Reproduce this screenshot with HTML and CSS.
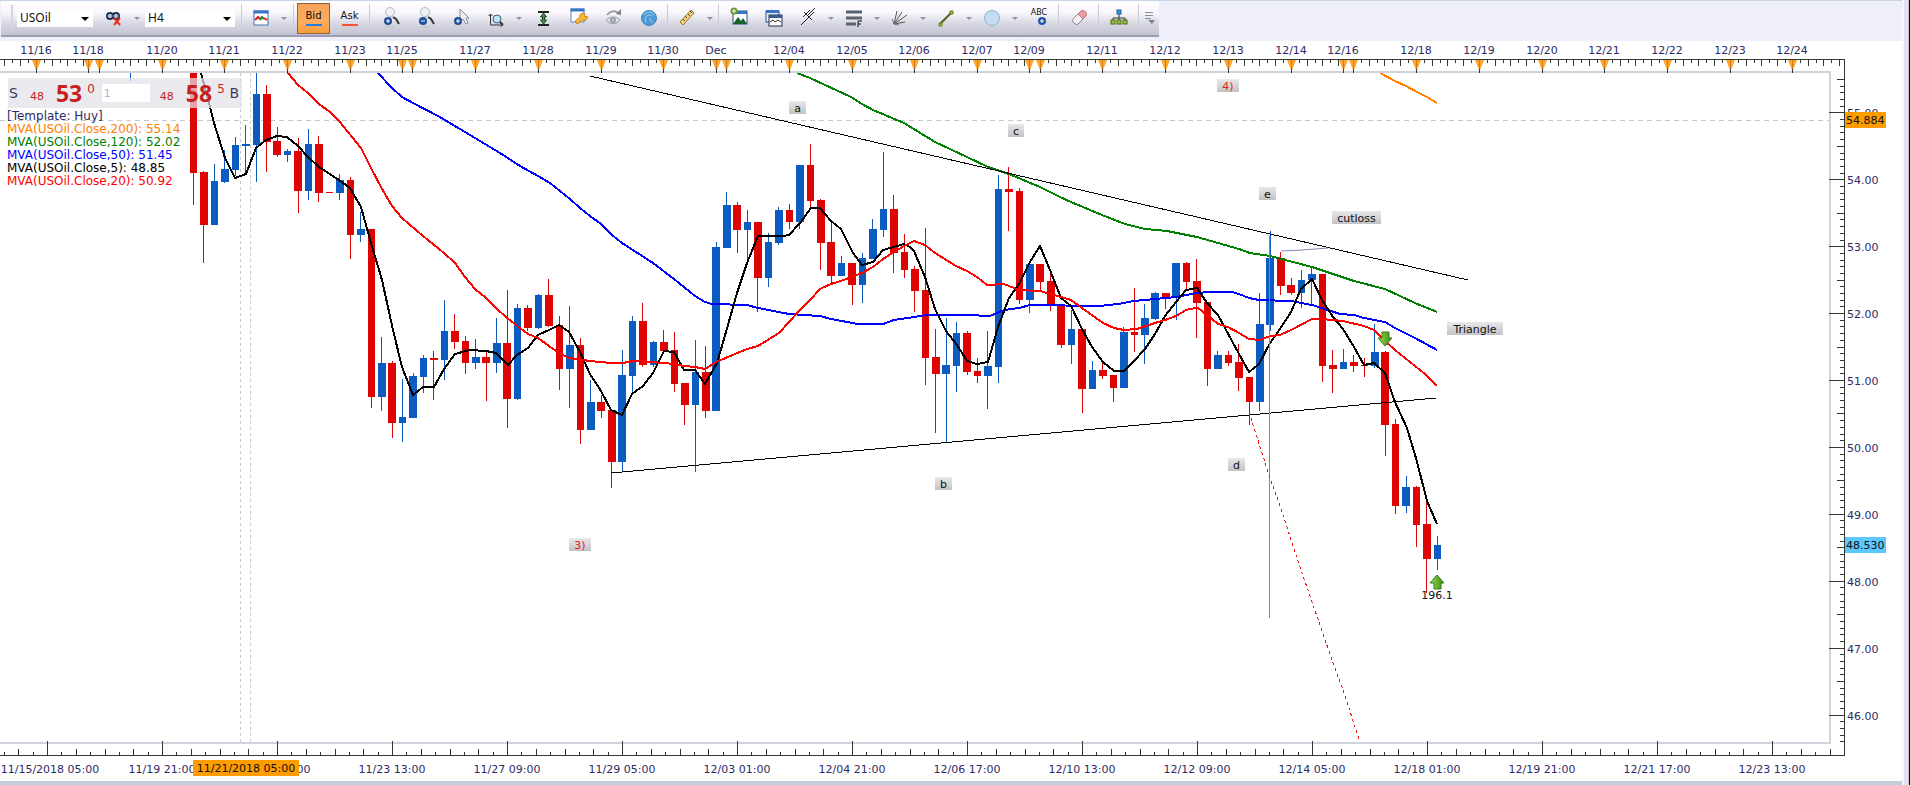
FILE: index.html
```html
<!DOCTYPE html>
<html lang="en">
<head>
<meta charset="utf-8">
<title>USOil H4</title>
<link rel="stylesheet" href="styles.css">
</head>
<body>
<div class="window">
<main class="shell">
  <header class="strip">
    <div class="toolbar" role="toolbar" aria-label="Chart tools">
      <span class="grip"></span>
      <span class="combo combo-symbol"><select aria-label="Symbol"><option>USOil</option></select></span>
      <div class="group group-link">
        <div class="split">
          <button class="tool" aria-label="Unlink"><svg width="18" height="22" viewBox="0 0 18 22"><g fill="none" stroke="#1d2c50" stroke-width="2"><circle cx="5" cy="9" r="3"/><circle cx="11" cy="9" r="3"/></g><path d="M2 9h12" stroke="#7090b0"/><path d="M9 11l6 7M15 11l-6 7" stroke="#e0301c" stroke-width="2"/></svg></button>
          <button class="drop" aria-label="Link options"></button>
        </div>
      </div>
      <span class="combo combo-period"><select aria-label="Period"><option>H4</option></select></span>
      <div class="group group-view">
        <span class="sep"></span>
        <div class="split">
          <button class="tool" aria-label="Chart type"><svg width="18" height="22" viewBox="0 0 18 22"><rect x="2" y="4" width="14" height="14" fill="#fff" stroke="#3d6fb4"/><path d="M1.500 3.500h15v3h-15z" fill="#3974c4"/><path d="M3 13l3-3 2 2" fill="none" stroke="#e02020" stroke-width="2"/><path d="M8 13l2-3 2 2" fill="none" stroke="#208020" stroke-width="2"/><path d="M12 11l3 2" stroke="#e02020" stroke-width="2"/></svg></button>
          <button class="drop" aria-label="Chart type options"></button>
        </div>
      </div>
      <span class="sep"></span>
      <div class="group group-price">
        <button class="price price-on">Bid</button>
        <button class="price price-ask">Ask</button>
      </div>
      <span class="sep"></span>
      <div class="group group-zoom">
        <button class="tool" aria-label="Zoom in"><svg width="20" height="22" viewBox="0 0 20 22"><circle cx="8" cy="5" r="4.500" fill="#eef1f5" stroke="#b4b8c0"/><path d="M11 10l3 2 3 5" fill="none" stroke="#333" stroke-width="2"/><circle cx="6" cy="14" r="4" fill="#1f4f98"/><path d="M4 14h4M6 12v4" stroke="#fff"/><path d="M4 20h9" stroke="#c8cad2" stroke-width="2"/></svg></button>
        <button class="tool" aria-label="Zoom out"><svg width="20" height="22" viewBox="0 0 20 22"><circle cx="8" cy="5" r="4.500" fill="#eef1f5" stroke="#b4b8c0"/><path d="M11 10l3 2 3 5" fill="none" stroke="#333" stroke-width="2"/><circle cx="6" cy="14" r="4" fill="#1f4f98"/><path d="M4 14h4" stroke="#fff"/><path d="M4 20h9" stroke="#c8cad2" stroke-width="2"/></svg></button>
        <button class="tool" aria-label="Zoom pointer"><svg width="20" height="22" viewBox="0 0 20 22"><path d="M8 2v12l3-2 3 5 2-1-2-5h3z" fill="#eceef2" stroke="#8a8e98"/><circle cx="6" cy="14" r="4" fill="#1f4f98"/><path d="M4 14h4M6 12v4" stroke="#fff"/></svg></button>
        <div class="split">
          <button class="tool" aria-label="Scale"><svg width="18" height="22" viewBox="0 0 18 22"><path d="M3.500 7v11h12M1.500 9l2-2 2 2M13.500 16l2 2-2 2" fill="none" stroke="#333"/><circle cx="10" cy="12" r="4" fill="#bfe6f6" stroke="#3a6080"/><path d="M13 15l3 3" stroke="#333" stroke-width="2"/></svg></button>
          <button class="drop" aria-label="Scale options"></button>
        </div>
        <button class="tool" aria-label="Fit height"><svg width="18" height="22" viewBox="0 0 18 22"><path d="M4 5h11M4 18h11" stroke="#222" stroke-width="2"/><path d="M9.500 6l3 4h-2v3h2l-3 4-3-4h2v-3h-2z" fill="#3a9a3a" stroke="#1d4020"/></svg></button>
        <button class="tool" aria-label="Properties"><svg width="20" height="22" viewBox="0 0 20 22"><rect x="3" y="2" width="13" height="13" fill="#fff" stroke="#5c88c8"/><path d="M2.500 1.500h14v3h-14z" fill="#3974c4"/><path d="M17 7a3 3 0 0 0-5 3l-5 4 2 3 6-4a3 3 0 0 0 4-4l-2 1-1-1z" fill="#f5b63a" stroke="#c98a14"/></svg></button>
        <button class="tool" aria-label="Show or hide"><svg width="20" height="22" viewBox="0 0 20 22"><g fill="none" stroke="#9a9da3"><path d="M3 13c4-4 11-4 14 0-4 5-10 5-14 0z"/><circle cx="10" cy="13" r="2" stroke-width="2"/><path d="M4 8c3-4 8-5 11-2" stroke-width="2"/></g><path d="M18 2v6l-5-1z" fill="#7c7f86"/></svg></button>
        <button class="tool" aria-label="Refresh"><svg width="20" height="22" viewBox="0 0 20 22"><circle cx="11" cy="11" r="7.500" fill="#4a9bd4" stroke="#3b86c2"/><path d="M6 8c3-4 8-4 10 0M8 15c-3-5 3-9 6-6M11 11l4 5" fill="none" stroke="#a6d2ee"/></svg></button>
      </div>
      <span class="sep"></span>
      <div class="split">
        <button class="tool" aria-label="Ruler"><svg width="20" height="22" viewBox="0 0 20 22"><path d="M3 15L14 3l3 3L6 18z" fill="#f4cf7a" stroke="#9a7636"/><path d="M6 12l2 2M8 9l2 2M11 7l2 2M13 4l2 2" stroke="#604818"/></svg></button>
        <button class="drop" aria-label="Ruler options"></button>
      </div>
      <span class="sep"></span>
      <div class="group">
        <button class="tool" aria-label="Add picture"><svg width="20" height="22" viewBox="0 0 20 22"><rect x="4" y="4" width="14" height="13" fill="#fff" stroke="#24508c"/><path d="M4 4h14v3H4z" fill="#3974c4"/><path d="M4 17l5-7 3 4 2-3 4 6z" fill="#18602a"/><circle cx="5" cy="4" r="3.500" fill="#6a9a28"/><path d="M3 4h4M5 2v4" stroke="#fff"/></svg></button>
        <button class="tool" aria-label="Windows"><svg width="20" height="22" viewBox="0 0 20 22"><rect x="2" y="4" width="13" height="11" fill="#e8effa" stroke="#24508c"/><path d="M2 3h13v3H2z" fill="#3974c4"/><rect x="5" y="8" width="13" height="11" fill="#fff" stroke="#1d2c50"/><path d="M5 8h13v3H5z" fill="#3a5a90"/><path d="M6 15l3-2 2 2 3-2 3 2" fill="none" stroke="#333"/></svg></button>
        <div class="split">
          <button class="tool" aria-label="Pitchfork"><svg width="18" height="22" viewBox="0 0 18 22"><path d="M2 18L11 9M5 5l8 8M4 10l7-7M7 13l8-8M9 8l7-7" fill="none" stroke="#222"/></svg></button>
          <button class="drop" aria-label="Pitchfork options"></button>
        </div>
        <div class="split">
          <button class="tool" aria-label="Levels"><svg width="18" height="22" viewBox="0 0 18 22"><path d="M1 5h16M1 11h16M1 17h10" stroke="#59636f" stroke-width="3"/><path d="M13 20v-6h4M13 17h3" fill="none" stroke="#111"/></svg></button>
          <button class="drop" aria-label="Levels options"></button>
        </div>
        <div class="split">
          <button class="tool" aria-label="Fan"><svg width="18" height="22" viewBox="0 0 18 22"><path d="M3 17L6 4M3 17l8-12M3 17L16 8M3 17l11-2" fill="none" stroke="#555"/><path d="M1 12l2 5 5 1" fill="none" stroke="#777"/></svg></button>
          <button class="drop" aria-label="Fan options"></button>
        </div>
        <div class="split">
          <button class="tool" aria-label="Line"><svg width="18" height="22" viewBox="0 0 18 22"><path d="M3 17L15 5" stroke="#55621c" stroke-width="2"/><path d="M2 16h3v3H2zM13 4h3v3h-3z" fill="#9ac43a" stroke="#607c1c"/></svg></button>
          <button class="drop" aria-label="Line options"></button>
        </div>
        <div class="split">
          <button class="tool" aria-label="Ellipse"><svg width="18" height="22" viewBox="0 0 18 22"><circle cx="9" cy="11" r="7.500" fill="#c4dcf0" stroke="#8fb4d8"/></svg></button>
          <button class="drop" aria-label="Ellipse options"></button>
        </div>
        <button class="tool" aria-label="Add text"><svg width="20" height="24" viewBox="0 0 20 24"><text x="10" y="9" class="icon-text">ABC</text><circle cx="13" cy="15" r="4" fill="#2456a4"/><path d="M11 15h4M13 13v4" stroke="#fff"/></svg></button>
      </div>
      <span class="sep"></span>
      <button class="tool" aria-label="Eraser"><svg width="20" height="22" viewBox="0 0 20 22"><path d="M4 12l5-5 5 5-5 5c-2 2-7-3-5-5z" fill="#f4f2f4" stroke="#8c8690"/><path d="M9 7l3-3c3-2 7 2 5 5l-3 3z" fill="#ee9aa2" stroke="#b87880"/></svg></button>
      <span class="sep"></span>
      <button class="tool" aria-label="Hierarchy"><svg width="20" height="22" viewBox="0 0 20 22"><path d="M10 7v7M4 14v-3h12v3" fill="none" stroke="#333"/><rect x="8" y="3" width="4" height="4" fill="#3a9ae0" stroke="#1c60a0"/><g fill="#9ac43a" stroke="#4c6a14"><rect x="2" y="13" width="4" height="4"/><rect x="8" y="13" width="4" height="4"/><rect x="14" y="13" width="4" height="4"/></g></svg></button>
      <span class="sep"></span>
      <button class="more" aria-label="More tools"><svg width="12" height="14" viewBox="0 0 12 14"><path d="M1 1.500h8M1 4.500h8M1 7.500h6" stroke="#8a8c98"/><path d="M4 9h7l-3 4z" fill="#7c7e8a"/></svg></button>
    </div>
  </header>

  <section class="chart" aria-label="USOil four hour chart">
    <svg id="chart" class="canvas" viewBox="0 41 1902 740"></svg>
    <div class="quote">
      <span class="side">S</span>
      <span class="small">48</span><span class="big">53</span><sup>0</sup>
      <select class="lots" aria-label="Lots"><option>1</option></select>
      <span class="small">48</span><span class="big">58</span><sup>5</sup>
      <span class="side">B</span>
    </div>
    <ul class="legend">
      <li>[Template: Huy]</li>
      <li class="mva200">MVA(USOil.Close,200): 55.14</li>
      <li class="mva120">MVA(USOil.Close,120): 52.02</li>
      <li class="mva50">MVA(USOil.Close,50): 51.45</li>
      <li class="mva5">MVA(USOil.Close,5): 48.85</li>
      <li class="mva20">MVA(USOil.Close,20): 50.92</li>
    </ul>
  </section>
  <footer class="base"></footer>
</main>
</div>
<script src="chart.js"></script>
</body>
</html>
```
FILE: styles.css
```css
*, *::before, *::after { box-sizing: border-box; }
body {
  margin: 0;
  background: #fff;
  font: 11px/13px "DejaVu Sans", Verdana, sans-serif;
  color: #2d2a66;
}
button, select { font: inherit; color: inherit; border: 0; padding: 0; margin: 0; background: none; border-radius: 0; }
select { appearance: none; }
.window { display: flex; border-right: 1px solid #0c1024; min-height: 100vh; }
.window::after { content: ""; flex: none; width: 7px; background: #e2e0f2; border-left: 2px solid #f6f6fc; border-right: 1px solid #c6c8da; }
.shell { flex: 1; min-width: 0; display: flex; flex-direction: column; }

.strip { height: 41px; padding: 0 0 4px 1px; background: #efeff9; border-top: 1px solid #c6d4e6; display: flex; }
.toolbar {
  display: flex;
  align-items: center;
  height: 36px;
  background: linear-gradient(#fff, #f6f6fb 35%, #d9d9e4 65%, #c2c2d2);
  border-bottom: 2px solid #9c9eb4;
}
.grip { width: 16px; height: 26px; border-left: 10px solid transparent; }
.grip::before { content: ""; display: block; width: 2px; height: 26px; background: #d4d5e0; }
.combo { position: relative; height: 18px; background: #fff; }
.combo::after {
  content: "";
  position: absolute;
  right: 4px;
  top: 8px;
  border: 4px solid transparent;
  border-top-color: #000;
  border-bottom: 0;
  pointer-events: none;
}
.combo select { display: block; width: 100%; height: 18px; padding: 0 3px; font: 12px/16px "Noto Sans", sans-serif; color: #111; }
.combo-symbol { width: 76px; }
.combo-period { width: 90px; }
.group, .split { display: flex; align-items: center; }
.group-link { padding: 0 2px 0 4px; }
.group-view { padding: 0 1px 0 4px; }
.group-price { gap: 3px; padding: 0 1px; }
.group-zoom { padding: 0 0 0 2px; }
.sep { width: 1px; height: 28px; margin: 0 2px; background: #cbccda; }
.tool { width: 35px; height: 30px; display: flex; align-items: center; justify-content: center; }
.split .tool { width: 34px; }
.drop { width: 12px; height: 30px; }
.drop::before {
  content: "";
  display: block;
  margin: 0 auto;
  width: 6px;
  border: 3px solid transparent;
  border-top-color: #8f90a2;
  border-bottom: 0;
}
.price { width: 33px; height: 31px; font-size: 10px; line-height: 12px; color: #111; display: flex; flex-direction: column; align-items: center; justify-content: center; gap: 2px; }
.price::after { content: ""; width: 16px; height: 2px; background: #1f7fe0; }
.price-on { background: linear-gradient(#f7a35c, #fbae5e 60%, #fb9d38); border: 1px solid #8a6440; }
.price-ask::after { background: #f4552c; }
.more { width: 18px; height: 30px; display: flex; align-items: center; justify-content: center; }
.icon-text { font: 8px "DejaVu Sans", sans-serif; fill: #111; text-anchor: middle; }

.chart { position: relative; }
.canvas { display: block; width: 100%; height: auto; }
.canvas text { font: 11px "DejaVu Sans", Verdana, sans-serif; fill: #2d2a66; }
.canvas .mid { text-anchor: middle; }
.canvas .ink { fill: #111; }
.canvas .hot { fill: #f01818; }
.crisp { shape-rendering: crispEdges; }
.quote {
  position: absolute;
  left: 8px;
  top: 37px;
  width: 234px;
  height: 30px;
  display: flex;
  align-items: center;
  padding: 0 3px 0 1px;
  background: rgba(226, 226, 232, 0.72);
  color: #c81e1e;
}
.side { font-size: 14px; color: #3a3a62; }
.side:first-child { margin-right: 12px; }
.side:last-child { margin-left: auto; }
.small { font-size: 11px; padding-top: 6px; }
.big { font: bold 23px/26px "Noto Sans", sans-serif; margin-left: 12px; }
sup { font-size: 12px; line-height: 12px; margin-left: 5px; align-self: flex-start; padding-top: 5px; }
.lots { width: 48px; height: 18px; margin: 0 10px 0 7px; padding: 0 2px; background: #fff; color: #b4b4c0; }
.legend { position: absolute; left: 7px; top: 69px; margin: 0; padding: 0; list-style: none; font-size: 12px; }
.mva200 { color: #ff8000; }
.mva120 { color: #008000; }
.mva50 { color: #0000ff; }
.mva5 { color: #000; }
.mva20 { color: #ff0000; }
.base { flex: 1; min-height: 4px; background: #c3cddc; }
```
FILE: chart.js
```js
const NS = "http://www.w3.org/2000/svg";
const chart = document.getElementById("chart");

function add(name, attrs, text) {
  const node = document.createElementNS(NS, name);
  for (const key in attrs) node.setAttribute(key, attrs[key]);
  if (text !== undefined) node.textContent = text;
  chart.appendChild(node);
  return node;
}
const box = (x, y, width, height, fill) => add("rect", { x, y, width, height, fill, class: "crisp" });
const line = (points, stroke, extra) => add("polyline", Object.assign({ points, stroke, fill: "none" }, extra));

add("defs", {}).innerHTML =
  '<linearGradient id="tag" x2="0" y2="1"><stop offset="0" stop-color="#e9e9ea"/><stop offset="1" stop-color="#c2c2c6"/></linearGradient>' +
  '<linearGradient id="arrow" x2="1" y2="0"><stop offset="0" stop-color="#a6dc4c"/><stop offset="1" stop-color="#2f8a12"/></linearGradient>' +
  '<clipPath id="plot"><rect x="0" y="73" width="1829" height="669"/></clipPath>';

const INK = "#333833";
const FRAME = "#cfd3dc";
box(0, 71, 1831, 2, FRAME);
box(0, 742, 1831, 2, FRAME);
box(1829, 71, 2, 673, FRAME);

/* crosshair */
line("0,120.5 1829,120.5", "#c8c8c8", { "stroke-dasharray": "5 4", class: "crisp" });
line("240.5,73 240.5,742", "#c8c8c8", { "stroke-dasharray": "3 3", class: "crisp" });
line("250.5,73 250.5,742", "#c8c8c8", { "stroke-dasharray": "3 3", class: "crisp" });

/* candles: direction, high, body top, body bottom, low */
const candles = `R 73 73 173 205;R 171 172 225 263;B 164 181 225 225;B 150 169 182 183;B 137 145 170 176;B 125 144 146 173;B 73 94 145 182;R 85 94 142 172;R 127 141 155 157;B 149 151 155 162;R 138 151 191 213;B 129 144 191 200;R 136 144 193 202;R 192 192 193 193;B 174 180 193 200;R 177 180 235 259;B 212 229 235 242;R 229 229 397 408;B 337 363 397 411;R 361 363 423 438;
B 379 417 423 442;B 373 376 418 418;B 355 358 377 393;R 351 358 360 400;B 300 331 360 380;R 314 331 342 349;R 336 341 363 374;B 339 357 363 369;R 352 357 363 401;B 318 343 363 373;R 290 343 399 428;B 304 308 399 400;R 305 308 328 331;B 294 295 328 329;R 279 295 326 327;R 316 325 369 390;B 306 345 369 408;R 338 345 430 444;B 380 402 430 430;R 395 402 411 418;
R 410 410 462 488;B 350 375 462 472;B 316 321 376 392;R 303 321 365 367;B 341 342 365 367;R 330 342 351 351;R 332 350 384 392;R 383 383 405 425;B 340 372 405 472;R 346 372 411 418;B 242 247 411 411;B 192 205 248 248;R 202 205 230 253;B 210 222 230 260;R 222 222 278 312;B 233 242 278 287;B 207 210 243 245;R 204 210 222 229;B 165 165 222 229;R 144 165 201 207;
R 199 200 243 270;R 222 242 276 284;B 256 263 276 276;R 263 263 285 305;B 253 258 285 303;B 219 229 259 259;B 152 209 230 237;R 195 209 253 273;R 234 252 270 278;R 266 269 291 312;R 228 290 358 385;R 329 357 374 433;B 318 365 374 442;B 322 333 366 392;R 331 333 372 375;R 358 371 376 383;B 331 366 376 409;B 175 189 367 383;R 167 189 192 231;R 188 191 300 304;
B 263 264 300 313;R 264 264 282 291;R 270 281 305 311;R 304 306 345 348;B 310 329 345 364;R 329 329 389 413;B 361 370 389 389;R 362 370 376 379;R 375 375 388 402;B 327 332 388 388;R 288 332 335 352;B 304 318 335 364;B 292 293 319 320;R 293 293 297 309;B 263 263 297 320;R 262 263 282 291;R 259 281 303 338;R 302 302 369 386;B 351 355 369 369;R 351 355 363 366;
R 344 362 378 391;R 377 377 402 425;B 293 324 402 411;B 231 258 325 331;R 252 258 286 295;R 278 285 293 295;B 270 280 293 308;B 267 274 280 304;R 274 274 366 382;R 350 365 369 393;B 349 362 369 369;R 355 362 366 372;R 358 365 366 377;B 324 352 366 368;R 351 352 425 456;R 419 424 506 514;B 476 487 506 513;R 486 487 525 547;R 502 524 559 593;B 536 545 559 570`;
const PITCH = 10.453;
candles.replace(/\n/g, "").split(";").forEach((row, i) => {
  const [dir, high, top, bottom, low] = row.split(" ");
  const x = 193.4 + i * PITCH;
  const fill = dir === "R" ? "#de0404" : "#0a5cc0";
  box(Math.round(x - 0.4), +high, 1, low - high, fill);
  const left = Math.round(x - 3.6);
  box(left, +top, Math.round(x + 4) - left, bottom - top, fill);
});
/* wick of the candle hidden behind the quote panel */
box(130, 73, 1, 8, "#0a5cc0");

/* moving averages */
const thick = { "stroke-width": 2, "stroke-linejoin": "round", "clip-path": "url(#plot)", class: "crisp" };
line("1380,73 1395,81 1406,86 1417,92 1427,97 1437,103", "#ff8000", thick);
line("797,73 810,78 851,97 862,104 873,110 904,123 935,142 967,157 988,167 1009,174 1040,187 1050,192 1060,197 1071,202 1102,215 1125,224 1145,229 1167,231 1197,237 1239,249 1250,253 1270,256 1312,267 1354,281 1385,289 1415,303 1437,312", "#008000", thick);
line("378,73 392,88 402,97 413,103 438,116 460,129 475,138 500,153 520,166 538,176 550,183 560,191 570,199 580,208 590,216 601,224 612,235 622,243 653,263 674,279 695,296 705,302 712,304 747,305 758,308 789,314 820,316 831,319 858,324 883,324 894,320 914,317 927,315 967,315 990,316 1004,310 1019,308 1030,305 1100,306 1118,304 1134,301 1155,299 1176,297 1197,293 1210,292 1232,292 1239,294 1249,298 1259,300 1291,301 1312,305 1322,308 1340,314 1354,315 1364,318 1385,322 1395,328 1415,338 1437,350", "#0000ff", thick);
line("201,73 210,107 214,123 225,158 235,178 246,174 256,148 266,140 277,136 287,137 298,146 308,157 319,167 339,180 350,188 361,207 371,243 382,280 393,330 402,367 413,395 423,387 434,387 444,369 455,354 470,350 486,351 496,353 508,365 517,355 528,348 538,335 549,330 559,325 569,332 580,352 590,374 601,391 611,410 622,415 632,394 643,386 653,373 664,351 674,352 684,370 695,370 705,384 717,363 728,325 737,293 747,263 758,236 783,236 789,235 800,223 811,208 820,208 831,221 841,229 853,253 862,265 873,262 883,250 904,244 910,247 914,251 925,277 935,309 946,331 957,345 967,361 977,364 988,362 998,327 1009,298 1019,284 1030,262 1040,246 1050,270 1061,298 1071,306 1082,329 1092,347 1103,362 1114,371 1124,371 1134,361 1145,349 1155,334 1165,316 1176,302 1186,290 1197,288 1207,303 1218,315 1239,354 1249,372 1259,364 1270,343 1280,329 1291,312 1301,289 1312,279 1322,300 1333,317 1343,329 1354,347 1364,365 1374,363 1385,373 1395,402 1407,428 1416,458 1427,501 1437,524", "#000", thick);
line("288,73 298,85 308,93 319,104 330,112 339,121 361,148 371,168 381,187 392,206 402,218 423,236 444,253 455,263 465,277 475,289 486,298 496,308 507,318 528,334 538,338 549,346 559,353 569,358 590,361 611,363 623,363 633,361 653,362 674,364 684,366 695,367 705,369 716,362 747,349 758,346 779,333 789,322 800,310 810,300 820,289 831,284 841,281 862,273 873,267 883,259 894,252 904,246 914,241 925,245 935,253 956,266 967,271 977,277 987,285 1004,284 1019,290 1040,291 1061,297 1071,300 1082,308 1103,323 1114,328 1124,330 1137,329 1155,323 1165,320 1176,316 1186,310 1195,308 1198,308 1207,315 1218,324 1228,327 1239,333 1249,339 1260,340 1270,336 1280,335 1291,330 1312,319 1322,319 1343,321 1364,326 1374,330 1385,341 1395,350 1425,374 1437,386", "#ff0000", thick);

/* drawn lines */
line("590,76 1468,280", "#000", { class: "crisp" });
line("611,473 1436,398", "#000", { class: "crisp" });
line("1281,251 1302,250 1328,248", "#8088b4", {});
box(1269, 235, 1, 383, "#7f87ac");
line("1249,412 1269,475 1280,506 1299,564 1332,660 1343,690 1359,739", "#f01010", { "stroke-dasharray": "3 3", class: "crisp" });

/* note tags */
[["a", 789, 101, 17], ["c", 1008, 124, 16], ["4)", 1217, 79, 22, 1], ["e", 1259, 187, 17], ["cutloss", 1332, 211, 49],
 ["Triangle", 1447, 322, 56], ["3)", 569, 538, 22, 1], ["d", 1228, 458, 17], ["b", 935, 477, 17]].forEach(([text, x, y, w, hot]) => {
  box(x, y, w, 13, "url(#tag)");
  add("text", { x: x + w / 2, y: y + 11, class: hot ? "mid hot" : "mid ink" }, text);
});

/* order arrows */
const arrow = { fill: "url(#arrow)", stroke: "#3a7a18" };
add("path", Object.assign({ d: "M1382 332h7v6h3l-7 8-7-8h4z" }, arrow));
add("path", Object.assign({ d: "M1434 589h7v-6h3l-7-8-7 8h4z" }, arrow));
add("text", { x: 1437, y: 599, class: "mid ink" }, "196.1");

/* top axis */
box(0, 59, 1845, 1, INK);
const days = [[36, "11/16"], [88, "11/18"], [99], [162, "11/20"], [224, "11/21"], [287, "11/22"], [350, "11/23"], [402, "11/25"], [412],
  [475, "11/27"], [538, "11/28"], [601, "11/29"], [663, "11/30"], [716, "Dec"], [726], [789, "12/04"], [852, "12/05"], [914, "12/06"],
  [977, "12/07"], [1029, "12/09"], [1040], [1102, "12/11"], [1165, "12/12"], [1228, "12/13"], [1291, "12/14"], [1343, "12/16"], [1353],
  [1416, "12/18"], [1479, "12/19"], [1542, "12/20"], [1604, "12/21"], [1667, "12/22"], [1730, "12/23"], [1792, "12/24"]];
[4, 12, 20, 28].forEach((x, i) => box(x, 60, 1, i % 2 ? 3 : 6, INK));
days.forEach(([x, label], i) => {
  const end = i + 1 < days.length ? days[i + 1][0] : 1845;
  for (let k = 1; x + k * 7.84 < end - 3; k++) box(Math.round(x + k * 7.84), 60, 1, k % 2 ? 3 : 6, INK);
  add("path", { d: `M${x - 4} 60h9l-4 10h-1z`, fill: "#ffa52e" });
  box(x, 60, 1, 9, "#d07c10");
  box(x, 69, 1, 4, INK);
  if (label) add("text", { x, y: 54, class: "mid" }, label);
});

/* bottom axis */
box(0, 755, 1845, 1, INK);
const times = ["11/15/2018 05:00", "11/19 21:00", "11/21 17:00", "11/23 13:00", "11/27 09:00", "11/29 05:00", "12/03 01:00", "12/04 21:00",
  "12/06 17:00", "12/10 13:00", "12/12 09:00", "12/14 05:00", "12/18 01:00", "12/19 21:00", "12/21 17:00", "12/23 13:00"];
for (let k = -3; k < 125; k++) {
  const x = Math.round(47 + k * 14.375);
  const h = k % 8 === 0 ? 14 : k % 2 === 0 ? 6 : 3;
  if (x < 1832) box(x, 755 - h, 1, h, INK);
}
times.forEach((text, k) => add("text", { x: k ? 47 + k * 115 : 50, y: 773, class: "mid" }, text));
box(193, 760, 106, 16, "#ff9c00");
add("text", { x: 246, y: 772, class: "mid ink" }, "11/21/2018 05:00");

/* price axis */
box(1844, 59, 1, 697, INK);
for (let k = -5; k <= 94; k++) {
  const y = Math.round(112.4 + k * 6.69);
  const w = k % 10 === 0 ? 15 : k % 5 === 0 ? 7 : 4;
  box(1844 - w, y, w, 1, INK);
  if (k % 10 === 0) add("text", { x: 1847, y: y + 5 }, (55 - k / 10).toFixed(2));
}
box(1845, 112, 41, 16, "#ff9c00");
add("text", { x: 1846, y: 124, class: "ink" }, "54.884");
box(1845, 537, 41, 16, "#5cc8ff");
add("text", { x: 1846, y: 549, class: "ink" }, "48.530");
```
